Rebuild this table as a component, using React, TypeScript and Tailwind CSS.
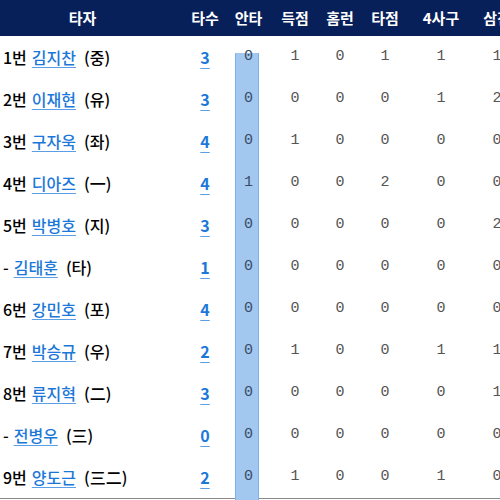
import React from "react";

type Row = {
  order: string;
  name: string;
  pos: string;
  ab: number;
  stats: number[];
};

const rows: Row[] = [
  { order: "1번", name: "김지찬", pos: "(중)", ab: 3, stats: [0, 1, 0, 1, 1, 1] },
  { order: "2번", name: "이재현", pos: "(유)", ab: 3, stats: [0, 0, 0, 0, 1, 2] },
  { order: "3번", name: "구자욱", pos: "(좌)", ab: 4, stats: [0, 1, 0, 0, 0, 0] },
  { order: "4번", name: "디아즈", pos: "(一)", ab: 4, stats: [1, 0, 0, 2, 0, 0] },
  { order: "5번", name: "박병호", pos: "(지)", ab: 3, stats: [0, 0, 0, 0, 0, 2] },
  { order: "-", name: "김태훈", pos: "(타)", ab: 1, stats: [0, 0, 0, 0, 0, 0] },
  { order: "6번", name: "강민호", pos: "(포)", ab: 4, stats: [0, 0, 0, 0, 0, 0] },
  { order: "7번", name: "박승규", pos: "(우)", ab: 2, stats: [0, 1, 0, 0, 1, 1] },
  { order: "8번", name: "류지혁", pos: "(二)", ab: 3, stats: [0, 0, 0, 0, 0, 1] },
  { order: "-", name: "전병우", pos: "(三)", ab: 0, stats: [0, 0, 0, 0, 0, 0] },
  { order: "9번", name: "양도근", pos: "(三二)", ab: 2, stats: [0, 1, 0, 0, 1, 0] },
];

const statCols = [
  { label: "안타", w: "w-[47px]" },
  { label: "득점", w: "w-[46px]" },
  { label: "홈런", w: "w-[44px]" },
  { label: "타점", w: "w-[46px]" },
  { label: "4사구", w: "w-[66px]" },
  { label: "삼진", w: "w-[46px]" },
];

const kr = "font-['Noto_Sans_CJK_KR',sans-serif]";

export default function App() {
  return (
    <div className="relative h-[500px] w-[500px] overflow-hidden bg-white">
      <table className={`w-[520px] table-fixed border-collapse ${kr}`}>
        <thead>
          <tr className="h-[36px] bg-[#08205a] text-[15px] font-bold text-white">
            <th className="w-[185px] pr-[20px] text-center">타자</th>
            <th className="w-[40px] text-center">타수</th>
            {statCols.map((c) => (
              <th key={c.label} className={`${c.w} text-center`}>
                {c.label}
              </th>
            ))}
          </tr>
        </thead>
        <tbody>
          {rows.map((r, i) => (
            <tr
              key={r.name}
              className={`h-[42px] ${i === rows.length - 1 ? "border-b border-[#8a8a8a]" : ""}`}
            >
              <td className="pl-[3px] text-[16px] font-medium whitespace-nowrap text-black">
                <span>{r.order}</span>
                <span className="ml-[5px] text-[#1c78d8] underline decoration-[#5a9ee6] underline-offset-[3px]">
                  {r.name}
                </span>
                <span className="ml-[8px]">{r.pos}</span>
              </td>
              <td className="text-center text-[16px] font-semibold text-[#1c78d8] underline decoration-[#5a9ee6] underline-offset-[4px]">
                {r.ab}
              </td>
              {r.stats.map((s, j) => (
                <td
                  key={j}
                  className={`text-center font-['Liberation_Mono',monospace] text-[15px] ${j === 0 ? "relative z-10 text-[#3a4a66]" : "text-[#555]"}`}
                >
                  {s}
                </td>
              ))}
            </tr>
          ))}
        </tbody>
      </table>
      {/* highlight bar over the 안타 column */}
      <div className="absolute left-[235px] top-[53px] h-[447px] w-[24px] border-x border-[#7cb2ea] bg-[#a2c8f0]" />
    </div>
  );
}
